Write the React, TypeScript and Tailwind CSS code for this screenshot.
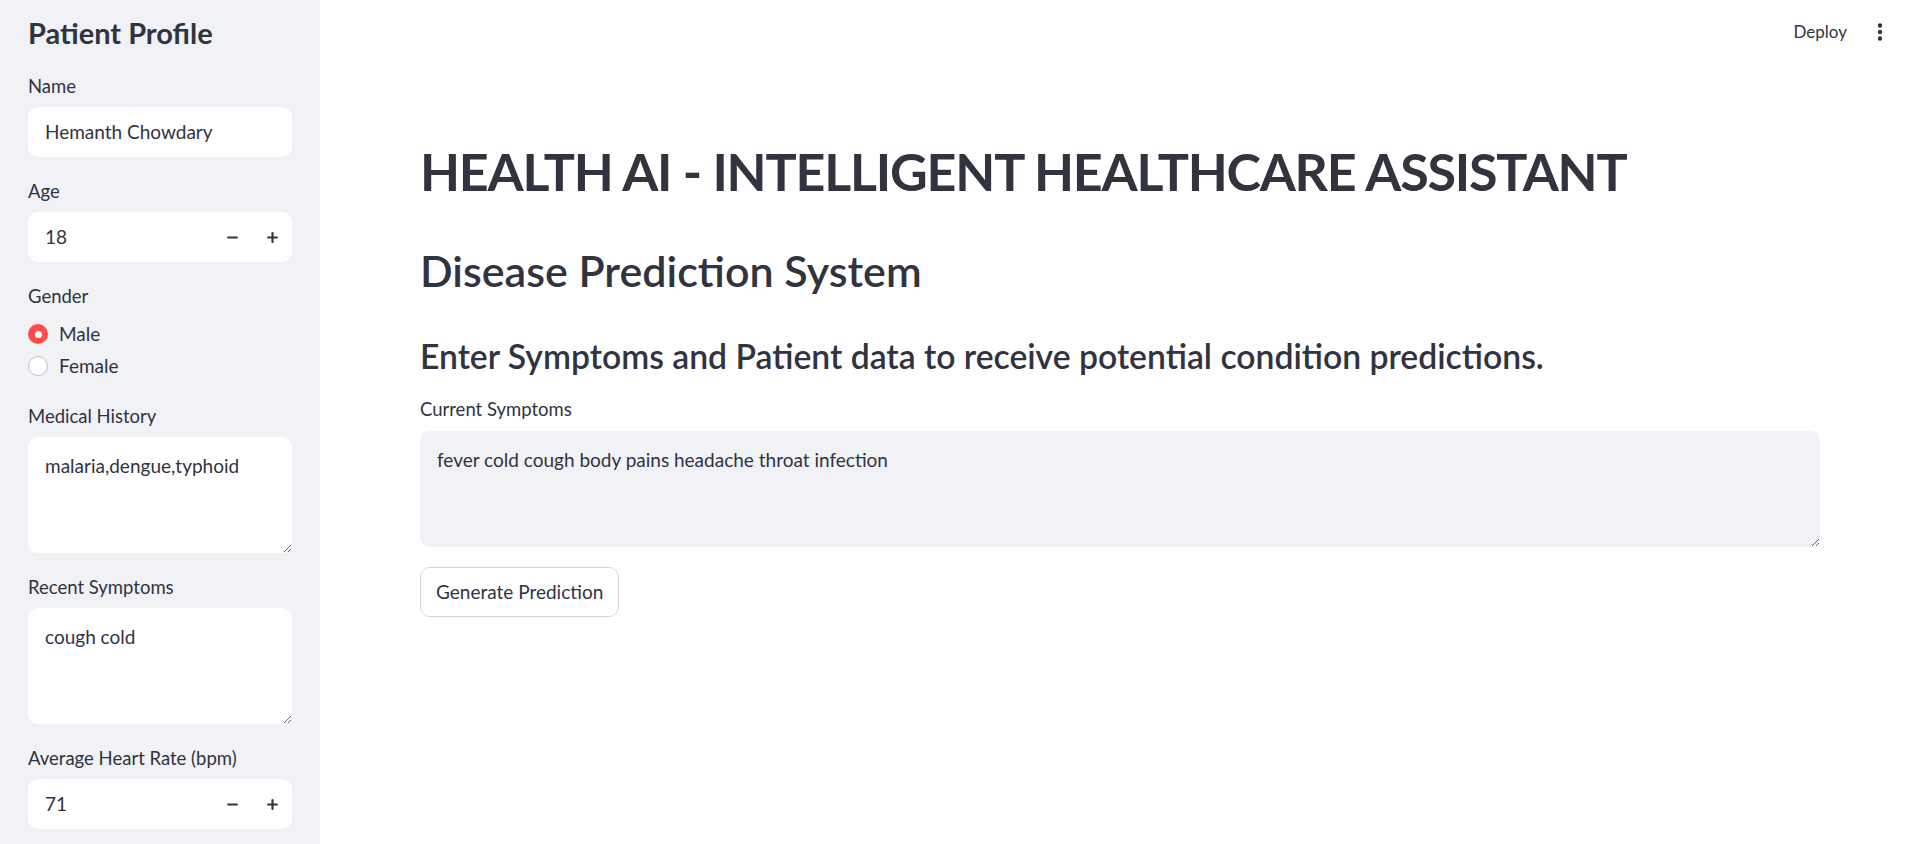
import { Minus, Plus } from "lucide-react";

const font = { fontFamily: "Lato, 'Noto Sans', sans-serif" };

function FieldLabel({ children }: { children: string }) {
    return <p className="text-[18.5px] leading-[21px] mb-[10px]">{children}</p>;
}

function NumberInput({ label, value }: { label: string; value: string }) {
    return (
        <div>
            <FieldLabel>{label}</FieldLabel>
            <div className="flex items-center h-[50px] bg-white rounded-[10px]">
                <span className="flex-1 pl-[17px] text-[19px]">{value}</span>
                <button className="w-[40px] h-full flex items-center justify-center">
                    <Minus size={15} strokeWidth={3.4} />
                </button>
                <button className="w-[40px] h-full flex items-center justify-center">
                    <Plus size={15} strokeWidth={3.4} />
                </button>
            </div>
        </div>
    );
}

function TextArea({ label, value, dark }: { label?: string; value: string; dark?: boolean }) {
    return (
        <div>
            {label && <FieldLabel>{label}</FieldLabel>}
            <textarea
                defaultValue={value}
                className={`block w-full h-[116px] resize-y rounded-[10px] px-[17px] pt-[13px] text-[19px] leading-[32px] outline-none ${
                    dark ? "bg-[#f0f2f6]" : "bg-white"
                }`}
                style={font}
            />
        </div>
    );
}

export default function App() {
    return (
        <div className="flex h-screen overflow-hidden bg-white text-[#31333f]" style={font}>
            {/* Sidebar */}
            <aside className="w-[320px] shrink-0 bg-[#f0f2f6] px-[28px] pt-[15px] flex flex-col gap-[24px]">
                <h2 className="text-[29px] leading-[36px] font-bold mb-[1px]">Patient Profile</h2>

                <div>
                    <FieldLabel>Name</FieldLabel>
                    <div className="flex items-center h-[50px] bg-white rounded-[10px] pl-[17px] text-[19px]">
                        Hemanth Chowdary
                    </div>
                </div>

                <NumberInput label="Age" value="18" />

                <div>
                    <p className="text-[18.5px] leading-[21px] mb-[11px]">Gender</p>
                    <div className="flex items-center h-[32px] gap-[11px] text-[19px]">
                        <span className="w-[20px] h-[20px] rounded-full bg-[#ff4b4b] flex items-center justify-center">
                            <span className="w-[7px] h-[7px] rounded-full bg-white" />
                        </span>
                        Male
                    </div>
                    <div className="flex items-center h-[32px] gap-[11px] text-[19px]">
                        <span className="w-[20px] h-[20px] rounded-full bg-white border border-[#bfc0c5]" />
                        Female
                    </div>
                </div>

                <TextArea label="Medical History" value="malaria,dengue,typhoid" />
                <TextArea label="Recent Symptoms" value="cough cold" />
                <NumberInput label="Average Heart Rate (bpm)" value="71" />
            </aside>

            {/* Main */}
            <main className="flex-1 flex flex-col">
                <header className="h-[64px] flex items-center justify-end pr-[24px]">
                    <span className="text-[17px] mr-[17px]">Deploy</span>
                    <button className="w-[32px] h-[32px] flex items-center justify-center">
                        <svg width="6" height="18" viewBox="0 0 6 18" fill="#31333f">
                            <circle cx="3" cy="2.5" r="2.2" />
                            <circle cx="3" cy="9" r="2.2" />
                            <circle cx="3" cy="15.5" r="2.2" />
                        </svg>
                    </button>
                </header>

                <div className="px-[100px] flex flex-col">
                    <h1 className="text-[52px] leading-[66px] font-bold tracking-[-1.2px] mt-[74px]">
                        HEALTH AI - INTELLIGENT HEALTHCARE ASSISTANT
                    </h1>
                    <h2 className="text-[43px] leading-[53px] font-semibold mt-[40px]">Disease Prediction System</h2>
                    <h3 className="text-[33.7px] leading-[40px] font-semibold mt-[39px]">
                        Enter Symptoms and Patient data to receive potential condition predictions.
                    </h3>
                    <p className="text-[18.5px] leading-[21px] mt-[23px] mb-[11px]">Current Symptoms</p>
                    <TextArea value="fever cold cough body pains headache throat infection" dark />
                    <div className="mt-[20px]">
                        <button className="h-[50px] px-[15px] border border-[#d5d6d9] rounded-[10px] text-[19px] bg-white">
                            Generate Prediction
                        </button>
                    </div>
                </div>
            </main>
        </div>
    );
}
